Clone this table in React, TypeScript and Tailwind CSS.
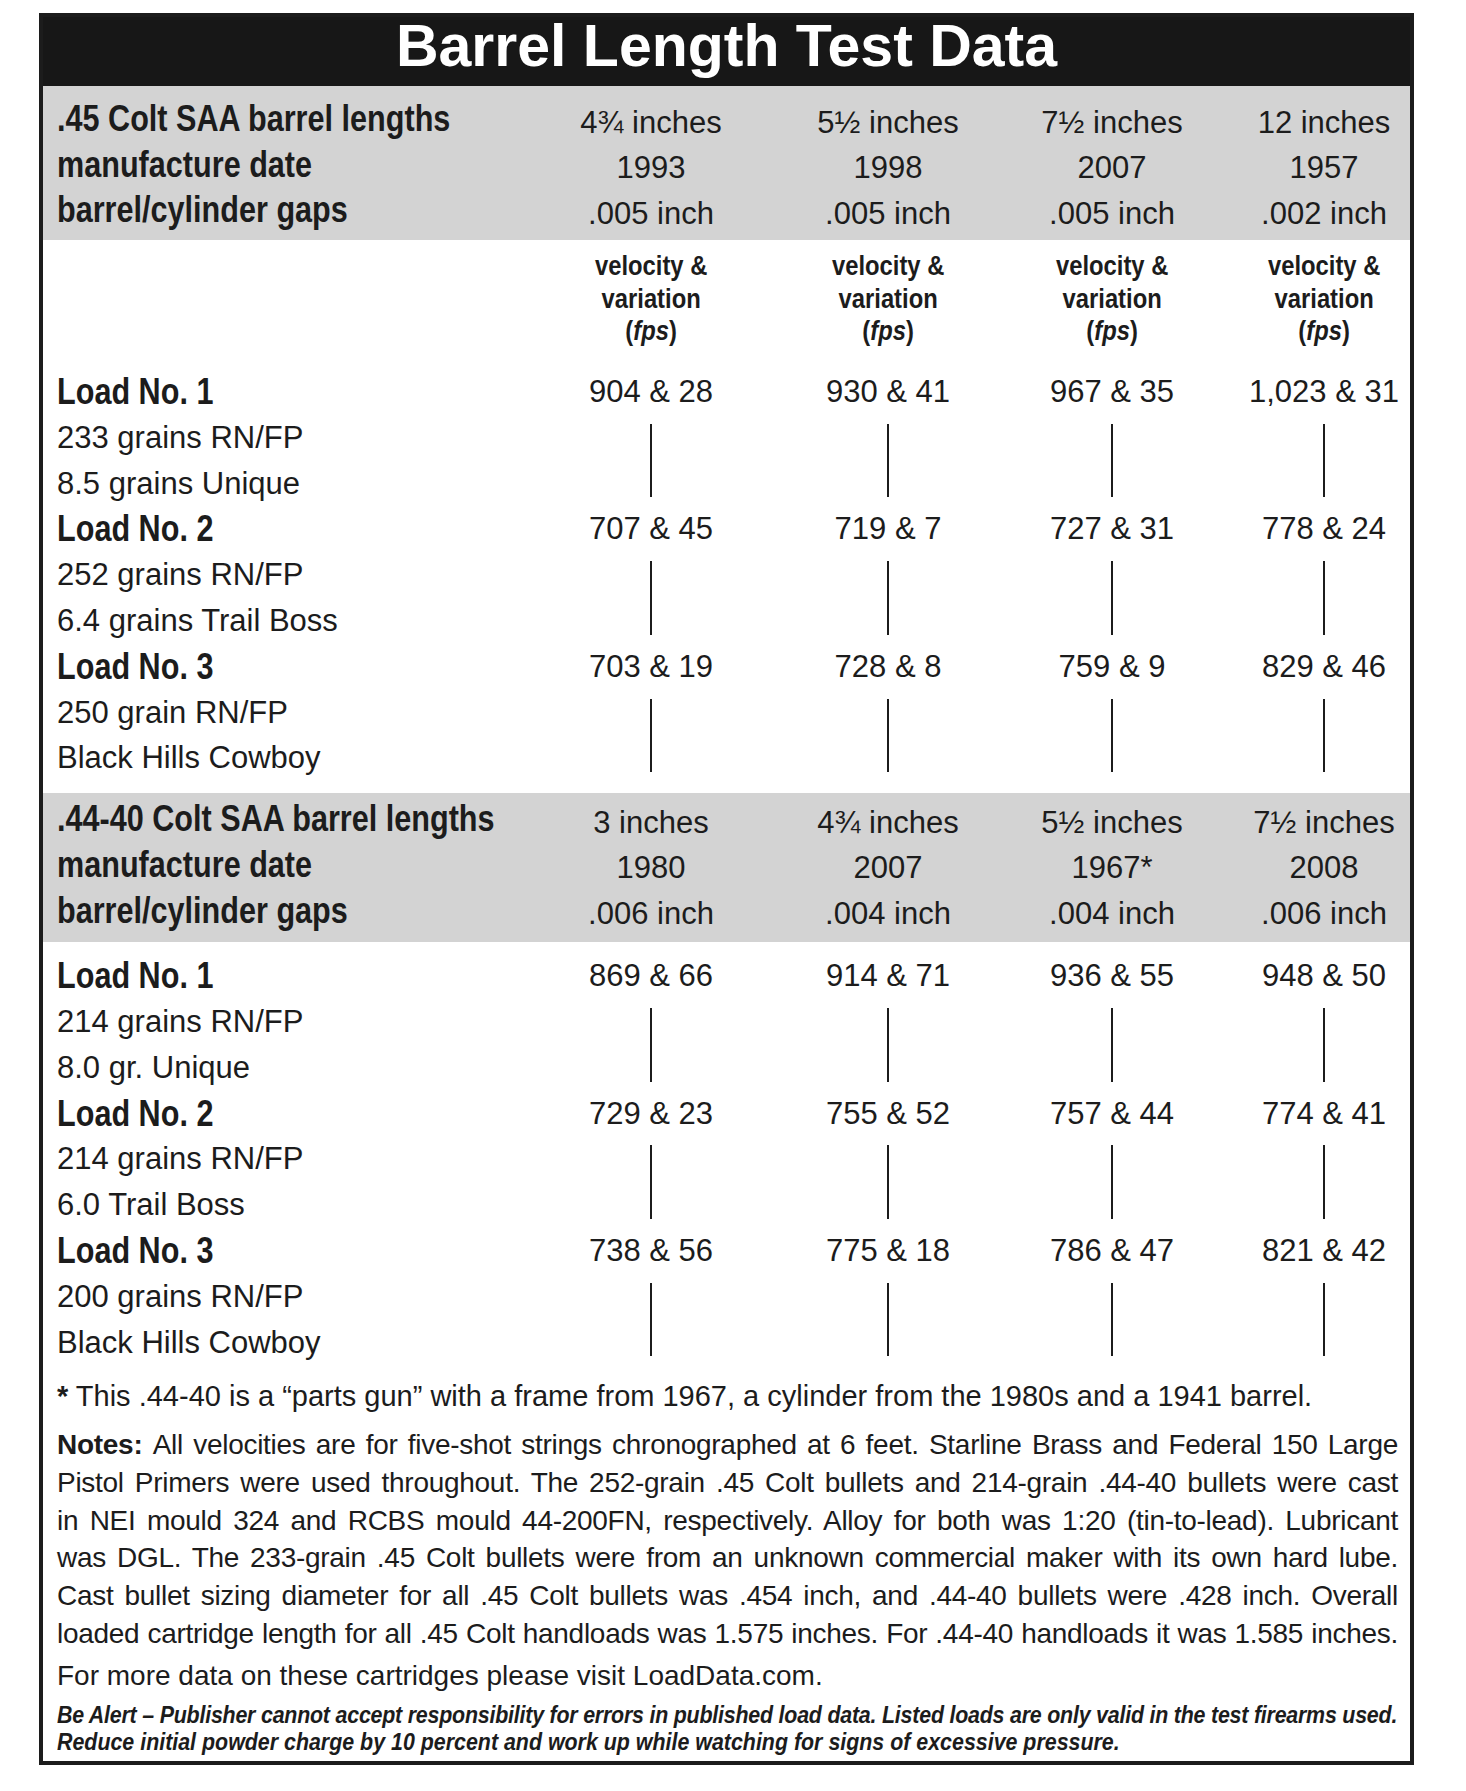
import type { ReactNode } from "react";

// Barrel length test data sheet

const REG = "font-['Liberation_Sans',Arial,sans-serif]";
const GRID = "grid grid-cols-[469px_278px_196px_252px_172px]";
// no narrow face installed: squeeze bold text horizontally instead
const SQUEEZE = "inline-block whitespace-nowrap font-bold scale-x-[0.85]";

type SpecRow = [string, string[]];
type Load = { name: string; lines: [string, string]; vals: string[] };

const colt45Specs: SpecRow[] = [
  [".45 Colt SAA barrel lengths", ["4¾ inches", "5½ inches", "7½ inches", "12 inches"]],
  ["manufacture date", ["1993", "1998", "2007", "1957"]],
  ["barrel/cylinder gaps", [".005 inch", ".005 inch", ".005 inch", ".002 inch"]],
];

const wcfSpecs: SpecRow[] = [
  [".44-40 Colt SAA barrel lengths", ["3 inches", "4¾ inches", "5½ inches", "7½ inches"]],
  ["manufacture date", ["1980", "2007", "1967*", "2008"]],
  ["barrel/cylinder gaps", [".006 inch", ".004 inch", ".004 inch", ".006 inch"]],
];

const colt45Loads: Load[] = [
  { name: "Load No. 1", lines: ["233 grains RN/FP", "8.5 grains Unique"], vals: ["904 & 28", "930 & 41", "967 & 35", "1,023 & 31"] },
  { name: "Load No. 2", lines: ["252 grains RN/FP", "6.4 grains Trail Boss"], vals: ["707 & 45", "719 & 7", "727 & 31", "778 & 24"] },
  { name: "Load No. 3", lines: ["250 grain RN/FP", "Black Hills Cowboy"], vals: ["703 & 19", "728 & 8", "759 & 9", "829 & 46"] },
];

const wcfLoads: Load[] = [
  { name: "Load No. 1", lines: ["214 grains RN/FP", "8.0 gr. Unique"], vals: ["869 & 66", "914 & 71", "936 & 55", "948 & 50"] },
  { name: "Load No. 2", lines: ["214 grains RN/FP", "6.0 Trail Boss"], vals: ["729 & 23", "755 & 52", "757 & 44", "774 & 41"] },
  { name: "Load No. 3", lines: ["200 grains RN/FP", "Black Hills Cowboy"], vals: ["738 & 56", "775 & 18", "786 & 47", "821 & 42"] },
];

const notes = [
  "All velocities are for five-shot strings chronographed at 6 feet. Starline Brass and Federal 150 Large",
  "Pistol Primers were used throughout. The 252-grain .45 Colt bullets and 214-grain .44-40 bullets were cast",
  "in NEI mould 324 and RCBS mould 44-200FN, respectively. Alloy for both was 1:20 (tin-to-lead). Lubricant",
  "was DGL. The 233-grain .45 Colt bullets were from an unknown commercial maker with its own hard lube.",
  "Cast bullet sizing diameter for all .45 Colt bullets was .454 inch, and .44-40 bullets were .428 inch. Overall",
  "loaded cartridge length for all .45 Colt handloads was 1.575 inches. For .44-40 handloads it was 1.585 inches.",
];

function Label({ children }: { children: ReactNode }) {
  return (
    <div className="pl-[14px]">
      <span className={`${SQUEEZE} origin-left text-[36px]`}>{children}</span>
    </div>
  );
}

function SpecBand({ rows, className }: { rows: SpecRow[]; className: string }) {
  return (
    <div className={`bg-[#d3d3d3] ${className}`}>
      {rows.map(([label, vals]) => (
        <div key={label} className={`${GRID} h-[45.7px] items-center leading-[45.7px]`}>
          <Label>{label}</Label>
          {vals.map((v, i) => (
            <div key={i} className="text-center text-[31px] whitespace-nowrap">
              {v}
            </div>
          ))}
        </div>
      ))}
    </div>
  );
}

function LoadBlock({ load }: { load: Load }) {
  return (
    <div className={`${GRID} grid-rows-[repeat(3,45.8px)] text-[31px] leading-[45.8px]`}>
      <Label>{load.name}</Label>
      {load.vals.map((v, i) => (
        <div key={i} className="text-center whitespace-nowrap">
          {v}
        </div>
      ))}
      <div className="pl-[14px]">{load.lines[0]}</div>
      {load.vals.map((_, i) => (
        <div key={i} className="row-span-2 flex justify-center py-[9px]">
          <div className="w-[2px] bg-[#1c1c1c]" />
        </div>
      ))}
      <div className="pl-[14px]">{load.lines[1]}</div>
    </div>
  );
}

function JustLine({ children }: { children: ReactNode }) {
  return (
    <div className="text-justify tracking-[-0.01em] [text-align-last:justify] [word-spacing:-4px]">{children}</div>
  );
}

export default function App() {
  return (
    <div className={`${REG} bg-white pl-[39px] pt-[13px] pb-[28px] text-[#1c1c1c]`}>
      <div className="w-[1375px] border-[4px] border-[#1c1c1c]">
        <div className="bg-[#171717] pb-[10px] text-center">
          <h1 className="text-[59px] leading-[59px] font-bold text-white">Barrel Length Test Data</h1>
        </div>

        <SpecBand rows={colt45Specs} className="pt-[10px] pb-[7px]" />

        <div className="pt-[10px] pb-[12px]">
          <div className={`${GRID} text-[28px] leading-[32.5px]`}>
            <div />
            {[0, 1, 2, 3].map((i) => (
              <div key={i} className="text-center">
                <span className={SQUEEZE}>
                  velocity &amp;
                  <br />
                  variation
                  <br />(<span className="italic">fps</span>)
                </span>
              </div>
            ))}
          </div>
          <div className="mt-[21.5px]">
            {colt45Loads.map((l) => (
              <LoadBlock key={l.name} load={l} />
            ))}
          </div>
        </div>

        <SpecBand rows={wcfSpecs} className="pt-[3px] pb-[9px]" />

        <div className="pt-[11px]">
          {wcfLoads.map((l) => (
            <LoadBlock key={l.name} load={l} />
          ))}
        </div>

        <div className="pr-[12px] pl-[14px]">
          <div className="mt-[13px] text-[29px] leading-[37.7px]">
            <span className="font-bold">*</span> This .44-40 is a “parts gun” with a frame from 1967, a cylinder from
            the 1980s and a 1941 barrel.
          </div>

          <div className="mt-[10px] text-[28px] leading-[37.7px]">
            {notes.map((line, i) => (
              <JustLine key={i}>
                {i === 0 && <span className="font-bold">Notes: </span>}
                {line}
              </JustLine>
            ))}
          </div>

          <div className="mt-[5px] text-[28px] leading-[37.7px]">
            For more data on these cartridges please visit LoadData.com.
          </div>

          <div className="mt-[7px] overflow-hidden pb-[5px]">
            <div className="w-[1441px] origin-left scale-x-[0.93] text-[23px] leading-[27px] font-bold italic">
              <div className="text-justify tracking-[-0.01em] [text-align-last:justify] [word-spacing:-4px]">
                Be Alert – Publisher cannot accept responsibility for errors in published load data. Listed loads are
                only valid in the test firearms used.
              </div>
              <div>Reduce initial powder charge by 10 percent and work up while watching for signs of excessive pressure.</div>
            </div>
          </div>
        </div>
      </div>
    </div>
  );
}
